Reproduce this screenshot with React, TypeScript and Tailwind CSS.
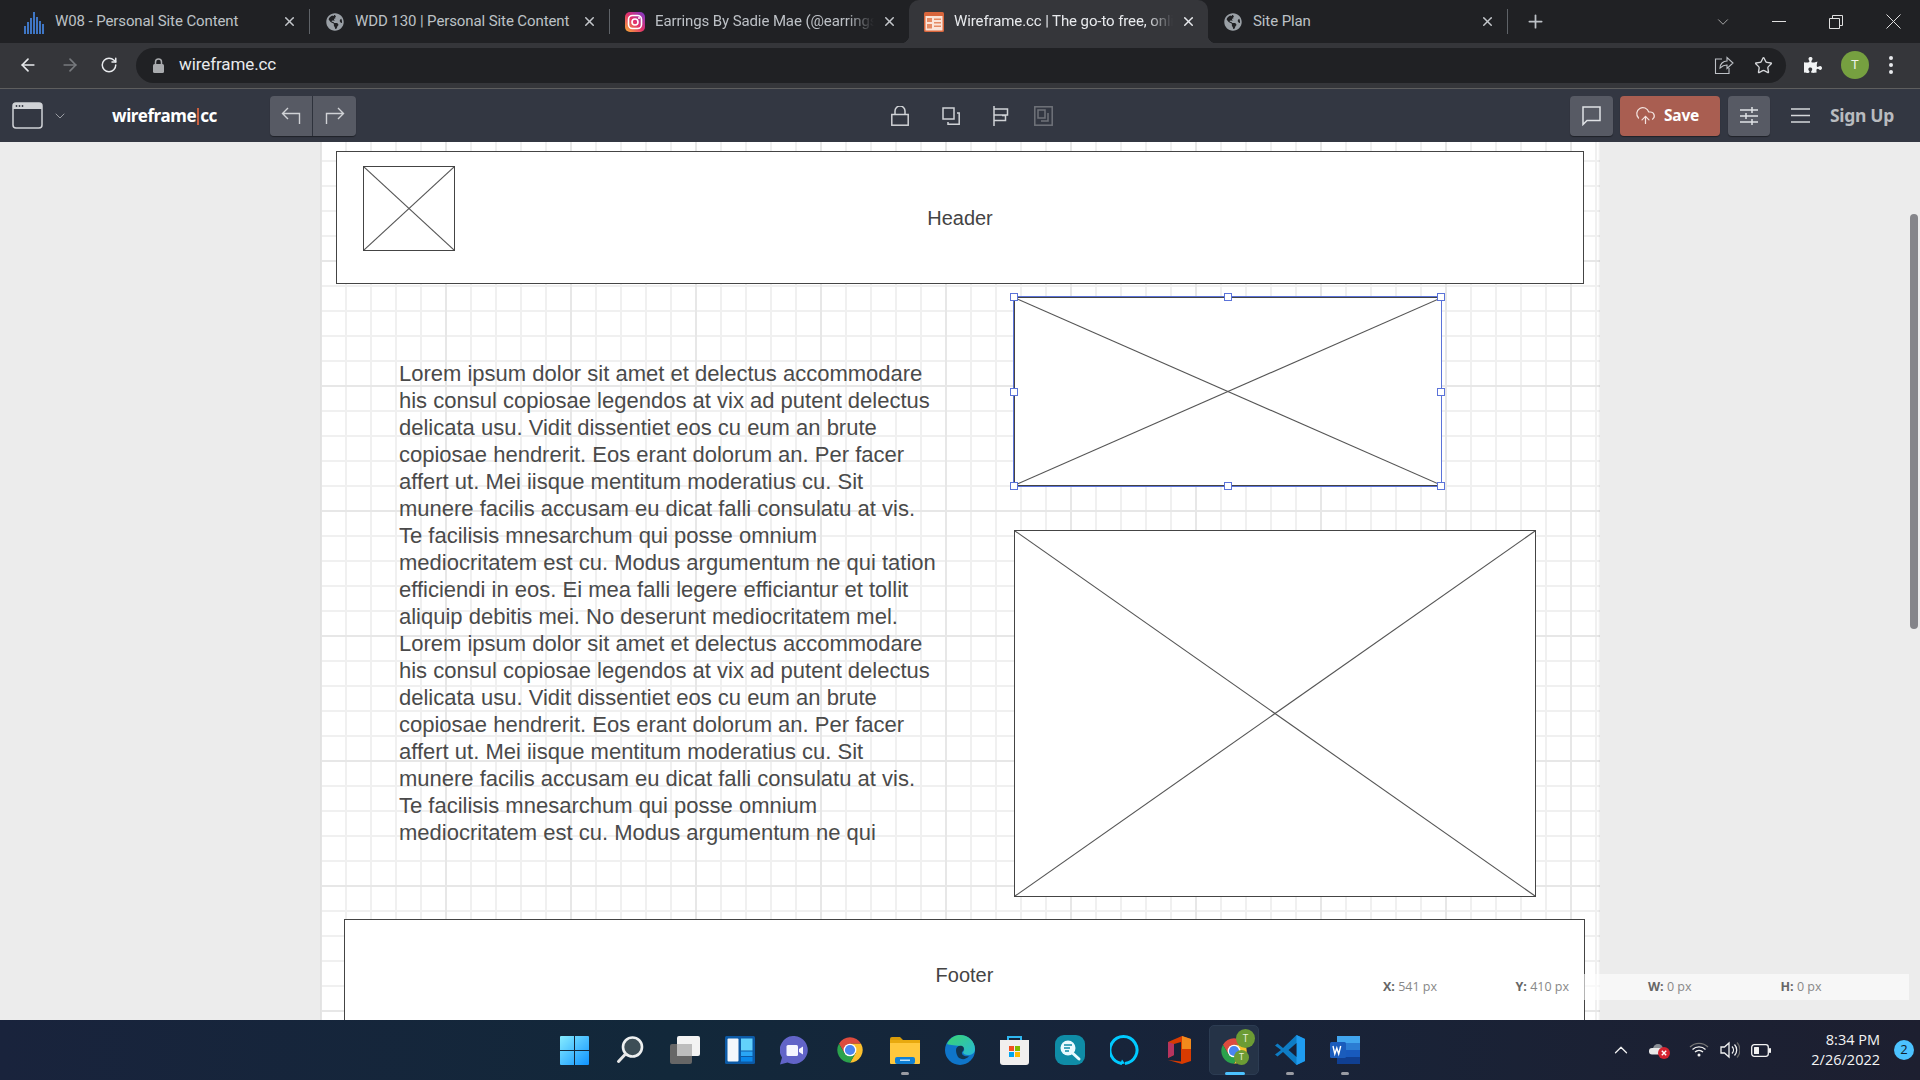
import React from "react";
import { ArrowLeft, ArrowRight, RotateCw, Star, CloudUpload, X, Plus, ChevronDown, ChevronUp } from "lucide-react";
import { FaGlobeAmericas, FaPuzzlePiece } from "react-icons/fa";

const W08 = () => (
  <svg width="21" height="24" viewBox="0 0 21 24" fill="#3f76c4">
    <rect x="0" y="16" width="2" height="8" /><rect x="3" y="12" width="2" height="12" /><rect x="6" y="8" width="2" height="16" />
    <rect x="9" y="2" width="2" height="22" /><rect x="12" y="7" width="2" height="17" /><rect x="15" y="11" width="2" height="13" /><rect x="18" y="14" width="2" height="10" />
  </svg>
);
const Insta = () => (
  <svg width="20" height="20" viewBox="0 0 20 20">
    <defs><linearGradient id="ig" x1="0" y1="1" x2="1" y2="0"><stop offset="0" stopColor="#f9b233" /><stop offset=".5" stopColor="#e1306c" /><stop offset="1" stopColor="#7a3ad0" /></linearGradient></defs>
    <rect width="20" height="20" rx="5" fill="url(#ig)" />
    <rect x="3.5" y="3.5" width="13" height="13" rx="4" fill="none" stroke="#fff" strokeWidth="1.6" />
    <circle cx="10" cy="10" r="3" fill="none" stroke="#fff" strokeWidth="1.6" /><circle cx="14" cy="6" r="1" fill="#fff" />
  </svg>
);
const WfFav = () => (
  <svg width="20" height="20" viewBox="0 0 20 20">
    <rect width="20" height="20" rx="1.5" fill="#d9663c" /><rect x="1.5" y="4" width="17" height="14.5" fill="#fbe4d8" />
    <rect x="3" y="6" width="5" height="4" fill="#e58a63" /><rect x="3" y="12" width="5" height="4.5" fill="#e58a63" /><rect x="10" y="6.5" width="7" height="1.5" fill="#e58a63" /><rect x="10" y="10" width="7" height="1.5" fill="#e58a63" /><rect x="10" y="13.5" width="7" height="1.5" fill="#e58a63" />
  </svg>
);

function Tab({ icon, title, active, fade }: { icon: React.ReactNode; title: string; active?: boolean; fade?: boolean }) {
  return (
    <div className={`relative flex h-full w-[299px] shrink-0 items-center pl-[14px] pr-[12px] ${active ? "rounded-t-[10px] bg-[#35363a] text-[#e8eaed]" : "text-[#bdc1c6]"}`}>
      {active && <div className="absolute bottom-0 left-[-8px] h-2 w-2 bg-[radial-gradient(circle_at_0_0,transparent_8px,#35363a_8.5px)]" />}
      {active && <div className="absolute bottom-0 right-[-8px] h-2 w-2 bg-[radial-gradient(circle_at_100%_0,transparent_8px,#35363a_8.5px)]" />}
      <div className="flex w-[21px] shrink-0 justify-center">{icon}</div>
      <div className={`ml-[10px] min-w-0 flex-1 overflow-hidden whitespace-nowrap text-[15px] tracking-[-0.1px] ${fade ? "[mask-image:linear-gradient(to_right,black_88%,transparent_100%)]" : ""}`}>{title}</div>
      <X size={15} strokeWidth={2.4} className={`ml-[8px] shrink-0 ${active ? "text-[#e8eaed]" : "text-[#c4c7cb]"}`} />
    </div>
  );
}
const TabSep = () => <div className="h-[25px] w-px shrink-0 bg-[#5f6368]" />;
const Globe = () => <FaGlobeAmericas size={18} color="#9aa0a6" />;

function TabStrip() {
  return (
    <div className="flex h-[43px] shrink-0 items-center bg-[#202124] pl-[10px]">
      <Tab icon={<W08 />} title="W08 - Personal Site Content" />
      <TabSep />
      <Tab icon={<Globe />} title="WDD 130 | Personal Site Content" />
      <TabSep />
      <Tab icon={<Insta />} title="Earrings By Sadie Mae (@earrings_by_sadie_mae)" fade />
      <Tab icon={<WfFav />} title="Wireframe.cc | The go-to free, online wireframe tool" fade active />
      <Tab icon={<Globe />} title="Site Plan" />
      <TabSep />
      <Plus size={21} strokeWidth={2} className="ml-[17px] text-[#bdc1c6]" />
      <ChevronDown size={18} strokeWidth={1} className="ml-[168px] text-[#d0d0d0]" />
      <svg width="14" height="14" viewBox="0 0 14 14" className="ml-[40px]" stroke="#e0e0e0" fill="none"><path d="M0 6.5H14" /></svg>
      <svg width="14" height="14" viewBox="0 0 14 14" className="ml-[43px]" stroke="#e0e0e0" fill="none"><path d="M.5 3.5h10v10H.5zM3.5 3.5V.5h10v10h-3" /></svg>
      <svg width="15" height="15" viewBox="0 0 15 15" className="ml-[43px]" stroke="#e0e0e0" fill="none"><path d="M.5.5l14 14M14.5.5l-14 14" /></svg>
    </div>
  );
}

function AddressBar() {
  return (
    <div className="flex h-[46px] shrink-0 items-center border-b border-[#5e5e5e] bg-[#35363a] pb-[1px] pl-[18px]">
      <ArrowLeft size={20} strokeWidth={2} className="text-[#e8eaed]" />
      <ArrowRight size={20} strokeWidth={2} className="ml-[22px] text-[#777a7e]" />
      <RotateCw size={18} strokeWidth={2} className="ml-[20px] text-[#e8eaed]" />
      <div className="ml-[18px] flex h-[35px] w-[1650px] shrink-0 items-center rounded-full bg-[#202124] pl-[17px]">
        <svg width="11" height="15" viewBox="0 0 11 15" fill="#a9abae"><rect y="6" width="11" height="9" rx="1.5" /><path d="M2.5 6V4a3 3 0 016 0v2" fill="none" stroke="#a9abae" strokeWidth="1.5" /></svg>
        <span className="ml-[15px] text-[17px] tracking-[-0.1px] text-[#e8eaed]">wireframe.cc</span>
        <div className="ml-auto flex items-center">
          <svg width="20" height="20" viewBox="0 0 20 20" fill="none" stroke="#bdc1c6" strokeWidth="1.1"><path d="M8 4H1.5v14.5H15V13M6 13c0-4 3-7 7-7V2.500l6 5.500-6 5.500V10c-3 0-5 1-7 3z" /></svg>
          <Star size={19} strokeWidth={1.7} className="ml-[20px] mr-[13px] text-[#d5d7da]" />
        </div>
      </div>
      <FaPuzzlePiece size={18} color="#f1f3f4" className="ml-[18px]" />
      <div className="ml-[19px] flex h-[28px] w-[28px] items-center justify-center rounded-full bg-[#76a040] text-[13px] text-[#eef3e6]">T</div>
      <div className="ml-[20px] flex flex-col gap-[3px]">
        <div className="h-[4px] w-[4px] rounded-full bg-[#e8eaed]" /><div className="h-[4px] w-[4px] rounded-full bg-[#e8eaed]" /><div className="h-[4px] w-[4px] rounded-full bg-[#e8eaed]" />
      </div>
    </div>
  );
}

const IC = "#d0d2d6";
function AppToolbar() {
  return (
    <div className="flex h-[53px] shrink-0 items-center bg-[#333742] font-['Noto_Sans',sans-serif]">
      <svg width="31" height="27" viewBox="0 0 31 27" fill="none" className="ml-[12px]"><rect x="1" y="1" width="29" height="25" rx="3" stroke={IC} strokeWidth="1.5" /><path d="M1 5.500V4a3 3 0 013-3h23a3 3 0 013 3v3H1z" fill={IC} /><circle cx="4.500" cy="4" r=".9" fill="#333742" /><circle cx="7.500" cy="4" r=".9" fill="#333742" /><circle cx="10.500" cy="4" r=".9" fill="#333742" /></svg>
      <ChevronDown size={16} strokeWidth={1.2} className="ml-[9px] text-[#b5b8bd]" />
      <div className="ml-[44px] w-[158px] text-[17px] font-bold tracking-[-0.4px] text-white">wireframe<span className="mx-[1px] inline-block h-[17px] w-[2px] translate-y-[3px] bg-[#c9603f]" />cc</div>
      <div className="flex h-[40px] w-[86px] overflow-hidden rounded-[4px] shadow-[0_1px_1px_rgba(0,0,0,.4)]">
        <div className="flex w-[42px] items-center justify-center bg-[#575a64]"><svg width="20" height="18" viewBox="0 0 20 18" fill="none" stroke={IC} strokeWidth="1.400"><path d="M7 1L1.500 6.500 7 12M1.500 6.500H18.500V17" /></svg></div>
        <div className="w-[1px] bg-[#2e323c]" />
        <div className="flex flex-1 items-center justify-center bg-[#575a64]"><svg width="20" height="18" viewBox="0 0 20 18" fill="none" stroke={IC} strokeWidth="1.400"><path d="M13 1l5.500 5.500L13 12M18.500 6.500H1.500V17" /></svg></div>
      </div>
      <svg width="18" height="20" viewBox="0 0 18 20" fill="none" stroke={IC} strokeWidth="1.500" className="ml-[535px]"><rect x=".8" y="8.500" width="16.400" height="10.700" /><path d="M4 8.500V5a5 5 0 0110 0v3.500" /></svg>
      <svg width="18" height="18" viewBox="0 0 18 18" fill="none" stroke={IC} strokeWidth="1.500" className="ml-[33px]"><rect x="1" y="1" width="11" height="11" /><path d="M15 6h2.200v11.200H6V15" /></svg>
      <svg width="16" height="20" viewBox="0 0 16 20" fill="none" stroke={IC} strokeWidth="1.500" className="ml-[33px]"><path d="M1 0v20M1 3h13.500v6H1M9 9.500h3.500v5H1" /></svg>
      <svg width="19" height="20" viewBox="0 0 19 20" fill="none" stroke="#70737a" strokeWidth="1.500" className="ml-[25px]"><rect x=".8" y=".8" width="17.400" height="18.400" /><rect x="4" y="4" width="7" height="8" /><path d="M14 7v8H7" /></svg>
      <div className="ml-[517px] flex h-[40px] w-[43px] items-center justify-center rounded-[4px] bg-[#575a64] shadow-[0_1px_1px_rgba(0,0,0,.4)]">
        <svg width="19" height="20" viewBox="0 0 19 20" fill="none" stroke="#e0e2e5" strokeWidth="1.500"><path d="M1 1h17v13.500H5L1 18.500z" /></svg>
      </div>
      <div className="ml-[7px] flex h-[40px] w-[100px] items-center rounded-[4px] bg-[#a95e51] pl-[15px] shadow-[0_1px_1px_rgba(0,0,0,.4)]">
        <CloudUpload size={21} strokeWidth={1.400} className="text-[#f3e3df]" />
        <span className="ml-[8px] text-[15.500px] font-bold tracking-[-0.2px] text-white">Save</span>
      </div>
      <div className="ml-[8px] flex h-[40px] w-[42px] items-center justify-center rounded-[4px] bg-[#575a64] shadow-[0_1px_1px_rgba(0,0,0,.4)]">
        <svg width="18" height="20" viewBox="0 0 18 20" fill="none" stroke="#e0e2e5" strokeWidth="1.500"><path d="M0 4h18M0 10h18M0 16h18M12 1v6M6 7v6M12 13v6" /></svg>
      </div>
      <svg width="19" height="15" viewBox="0 0 19 15" fill="none" stroke="#d5d7da" strokeWidth="1.600" className="ml-[21px]"><path d="M0 1h19M0 7.500h19M0 14h19" /></svg>
      <span className="ml-[20px] text-[17.500px] font-bold tracking-[-0.3px] text-[#b9bbbf]">Sign Up</span>
    </div>
  );
}

function Placeholder({ className }: { className: string }) {
  return (
    <div className={`absolute border border-[#444] bg-white ${className}`}>
      <svg className="h-full w-full" viewBox="0 0 100 100" preserveAspectRatio="none" fill="none" stroke="#555" strokeWidth="1.100">
        <line x1="0" y1="0" x2="100" y2="100" vectorEffect="non-scaling-stroke" />
        <line x1="100" y1="0" x2="0" y2="100" vectorEffect="non-scaling-stroke" />
      </svg>
    </div>
  );
}

const HS = "absolute h-[8px] w-[8px] -translate-x-1/2 -translate-y-1/2 border border-[#5b73d9] bg-white";
const lines = [
  "Lorem ipsum dolor sit amet et delectus accommodare",
  "his consul copiosae legendos at vix ad putent delectus",
  "delicata usu. Vidit dissentiet eos cu eum an brute",
  "copiosae hendrerit. Eos erant dolorum an. Per facer",
  "affert ut. Mei iisque mentitum moderatius cu. Sit",
  "munere facilis accusam eu dicat falli consulatu at vis.",
  "Te facilisis mnesarchum qui posse omnium",
];
const para = [
  ...lines,
  "mediocritatem est cu. Modus argumentum ne qui tation",
  "efficiendi in eos. Ei mea falli legere efficiantur et tollit",
  "aliquip debitis mei. No deserunt mediocritatem mel.",
  ...lines,
  "mediocritatem est cu. Modus argumentum ne qui",
];

function Canvas() {
  return (
    <div className="relative flex-1 overflow-hidden bg-[#ececec] font-['Liberation_Sans',sans-serif]">
      <div className="relative mx-auto h-full w-[1280px] bg-white bg-[image:linear-gradient(to_right,#e7e7e7_2px,transparent_2px),linear-gradient(to_bottom,#e7e7e7_2px,transparent_2px),linear-gradient(to_right,#f0f0f0_2px,transparent_2px),linear-gradient(to_bottom,#f0f0f0_2px,transparent_2px)] bg-[size:125px_125px,125px_125px,25px_25px,25px_25px] bg-[position:0_0,0_118px,0_0,0_18px] shadow-[inset_-3px_0_2px_-2px_rgba(0,0,0,.08),inset_3px_0_2px_-2px_rgba(0,0,0,.03)]">
        <div className="absolute left-[16px] top-[9px] flex h-[133px] w-[1248px] items-center justify-center border border-[#444] bg-white text-[20px] text-[#444]">Header</div>
        <Placeholder className="left-[43px] top-[24px] h-[85px] w-[92px]" />
        <div className="absolute left-[79px] top-[218px] whitespace-nowrap text-[22px] leading-[27px] text-[#4a4a4a]">
          {para.map((l, i) => <div key={i}>{l}</div>)}
        </div>
        <Placeholder className="left-[694px] top-[155px] h-[189px] w-[428px]" />
        <div className="absolute left-[693px] top-[154px] h-[191px] w-[429px] border border-[#5b73d9]">
          <div className={`${HS} left-0 top-0`} /><div className={`${HS} left-1/2 top-0`} /><div className={`${HS} left-full top-0`} />
          <div className={`${HS} left-0 top-1/2`} /><div className={`${HS} left-full top-1/2`} />
          <div className={`${HS} left-0 top-full`} /><div className={`${HS} left-1/2 top-full`} /><div className={`${HS} left-full top-full`} />
        </div>
        <Placeholder className="left-[694px] top-[388px] h-[367px] w-[522px]" />
        <div className="absolute left-[24px] top-[777px] flex h-[112px] w-[1241px] items-center justify-center border border-[#444] bg-white text-[20px] text-[#444]">Footer</div>
      </div>
      <div className="absolute left-[1320px] top-[832px] flex h-[26px] w-[589px] items-center bg-white/60 pl-[63px] font-['Open_Sans',sans-serif] text-[12.500px] text-[#888]">
        {[["X:", "541 px"], ["Y:", "410 px"], ["W:", "0 px"], ["H:", "0 px"]].map(([a, b]) => (
          <div key={a} className="w-[132.500px] shrink-0"><b className="text-[#666]">{a}</b> {b}</div>
        ))}
      </div>
      <div className="absolute left-[1910px] top-[72px] h-[415px] w-[8px] rounded-full bg-[#85858a]" />
    </div>
  );
}

const Chrome = ({ size = 28 }: { size?: number }) => (
  <svg width={size} height={size} viewBox="4 2 40 44">
    <path d="M6.680 14A20 20 0 0141.320 14H24L15.340 29z" fill="#dd4b3e" />
    <path d="M41.320 14A20 20 0 0124 44L32.660 29 24 14z" fill="#fbc02d" />
    <path d="M24 44A20 20 0 016.680 14L15.340 29H32.660z" fill="#2ba24c" />
    <circle cx="24" cy="24" r="10" fill="#fff" /><circle cx="24" cy="24" r="8" fill="#4a85f0" />
  </svg>
);

const icons: React.ReactNode[] = [
  <svg key="win" width="29" height="29" viewBox="0 0 29 29"><defs><linearGradient id="w" x1="0" y1="0" x2="1" y2="1"><stop offset="0" stopColor="#86ecff" /><stop offset="1" stopColor="#0f93ff" /></linearGradient></defs><path d="M0 1a1 1 0 011-1h13v14H0zM15 0h13a1 1 0 011 1v13H15zM0 15h14v14H1a1 1 0 01-1-1zM15 15h14v13a1 1 0 01-1 1H15z" fill="url(#w)" /></svg>,
  <svg key="s" width="28" height="28" viewBox="0 0 28 28"><circle cx="16.500" cy="11" r="9.500" fill="#3d4e56" stroke="#eef0f0" strokeWidth="2.600" /><path d="M9.500 18L2.500 25.500" stroke="#e6e6e6" strokeWidth="3" strokeLinecap="round" /></svg>,
  <svg key="t" width="30" height="28" viewBox="0 0 30 28"><rect x="0" y="8" width="22" height="20" rx="2" fill="#666" /><rect x="7" y="0" width="23" height="20" rx="2" fill="#f3f3f3" /><rect x="7" y="8" width="15" height="12" fill="#bdbdbd" /></svg>,
  <svg key="wd" width="30" height="28" viewBox="0 0 30 28"><rect width="30" height="28" rx="1.500" fill="#0c5aa6" /><rect x="2.500" y="2.500" width="11" height="23" rx="1" fill="#f3f7fb" /><rect x="16" y="2.500" width="11.500" height="12" fill="#63d1fb" /><rect x="16" y="15.500" width="11.500" height="4.500" fill="#2aa6f5" /><rect x="16" y="21" width="11.500" height="4.500" fill="#0a88ea" /></svg>,
  <svg key="c" width="29" height="29" viewBox="0 0 29 29"><path d="M14.500 0a14 14 0 11-7 26.500L0 28.500l2-7A14 14 0 0114.500 0z" fill="#6264c8" /><rect x="6.500" y="9" width="11.500" height="11" rx="1.500" fill="#f6f6ff" /><path d="M19 13l4-2.500v8L19 16z" fill="#f6f6ff" /></svg>,
  <Chrome key="ch" />,
  <svg key="f" width="30" height="27" viewBox="0 0 30 27"><path d="M0 2a2 2 0 012-2h8l3 3h-13z" fill="#d99c0a" /><rect y="3" width="30" height="24" rx="1" fill="#ffc83d" /><rect y="3" width="30" height="3" fill="#e8a90e" /><rect x="5" y="20" width="20" height="7" rx="2" fill="#0f7fd4" /><rect x="10" y="22.500" width="10" height="1.500" fill="#bfe3fb" /></svg>,
  <svg key="e" width="30" height="30" viewBox="0 0 30 30"><defs><linearGradient id="eg" x1="0" y1="0" x2="1" y2="1"><stop offset="0" stopColor="#3bd46e" /><stop offset="1" stopColor="#27b8d8" /></linearGradient></defs><circle cx="15" cy="15" r="15" fill="#0f75c9" /><path d="M2 9C5 2 11 0 15 0c8 0 15 6 15 14 0 4-3 6-7 6-3 0-5-1-5-3 2-1 2-5-3-6C9 10 3 10 2 9z" fill="url(#eg)" /><path d="M11 15c0-3 3-5 6-4 3 1 2 5 0 6-1 3 3 5 7 4-3 4-8 4-11 1-1-2-2-4-2-7z" fill="#12344f" /></svg>,
  <svg key="st" width="29" height="30" viewBox="0 0 29 30"><path d="M8 6V2h13v4" fill="none" stroke="#2fb7f0" strokeWidth="2" /><path d="M0 5h29v22a3 3 0 01-3 3H3a3 3 0 01-3-3z" fill="#f1efee" /><rect x="9" y="11" width="5" height="5" fill="#f25022" /><rect x="15" y="11" width="5" height="5" fill="#7fba00" /><rect x="9" y="17" width="5" height="5" fill="#00a4ef" /><rect x="15" y="17" width="5" height="5" fill="#ffb900" /></svg>,
  <svg key="q" width="30" height="30" viewBox="0 0 30 30"><rect width="30" height="30" rx="9" fill="#0f8ca6" /><circle cx="13" cy="13" r="7.500" fill="#eafafe" /><path d="M18 18.500l6 5.500" stroke="#eafafe" strokeWidth="3" strokeLinecap="round" /><path d="M9 10h8M9 13h6M10 16h4" stroke="#0f8ca6" strokeWidth="1.500" /></svg>,
  <svg key="a" width="30" height="30" viewBox="0 0 30 30"><path d="M12 28.500A13.500 13.500 0 1115 28.500" fill="none" stroke="#00caff" strokeWidth="3" /><path d="M12 24.500l3 4-5 1z" fill="#00caff" /></svg>,
  <svg key="o" width="24" height="28" viewBox="0 0 24 28"><path d="M0 6L14 0l9 3v22l-9 3-14-4 13 1.500V6L6 8v11l-6 3z" fill="#d83b01" /><path d="M0 6l6 2v11l-6 3z" fill="#b7345f" /><path d="M14 0l9 3v10H14z" fill="#f28a1c" /></svg>,
  <div key="act" className="relative h-[29px] w-[29px]">
    <div className="absolute left-0 top-[1px]"><Chrome size={28} /></div>
    <div className="absolute left-[16px] top-[-7px] flex h-[19px] w-[19px] items-center justify-center rounded-full bg-[#6c9c34] text-[10px] text-[#e8f0dc]">T</div>
    <div className="absolute left-[14px] top-[14px] flex h-[15px] w-[15px] items-center justify-center rounded-full bg-[#6c9c34] text-[9px] text-[#e8f0dc]">T</div>
  </div>,
  <svg key="v" width="30" height="30" viewBox="0 0 30 30"><path d="M21.500 0L30 4v22l-8.500 4L8 17l-5.500 4.500L0 19.500 6 15 0 10.500 2.500 8.500 8 13z" fill="#0e7cc4" /><path d="M21.500 0L30 4v22l-8.500 4z" fill="#1f9cf0" /><path d="M21.500 8l-8 7 8 7z" fill="#16223a" /></svg>,
  <svg key="wo" width="30" height="28" viewBox="0 0 30 28"><rect x="7" y="0" width="23" height="7" fill="#41a5ee" /><rect x="7" y="7" width="23" height="7" fill="#2b7cd3" /><rect x="7" y="14" width="23" height="7" fill="#185abd" /><rect x="7" y="21" width="23" height="7" fill="#103f91" /><rect y="6" width="16" height="16" rx="1.500" fill="#1a5cbc" /><path d="M3 10l1.800 8 2-6 1.900 6 2-8" fill="none" stroke="#fff" strokeWidth="1.400" /></svg>,
];
const dots = [6, 12, 13, 14];

function Taskbar() {
  return (
    <div className="flex h-[60px] shrink-0 items-center bg-[linear-gradient(to_right,#19233c_0%,#12283a_35%,#17243a_58%,#1d1f30_100%)] pl-[547px] font-['Open_Sans',sans-serif]">
      {icons.map((ic, i) => {
        const active = i === 12;
        return (
          <div key={i} className={`relative flex h-[50px] w-[55px] shrink-0 items-center justify-center ${i === 0 ? "" : ""}`}>
            {active && <div className="absolute inset-y-0 left-[2px] right-[3px] rounded-[5px] border border-[#2c3c52] bg-[#253347]" />}
            <div className="relative">{ic}</div>
            {active && <div className="absolute bottom-0 left-1/2 h-[3.500px] w-[20px] -translate-x-1/2 rounded-full bg-[#4cc2ff]" />}
            {(i === 6 || i === 13 || i === 14) && <div className="absolute bottom-[0px] left-1/2 h-[3.500px] w-[8px] -translate-x-1/2 rounded-full bg-[#9a9ca3]" />}
          </div>
        );
      })}
      <ChevronUp size={22} strokeWidth={1.400} className="ml-[238px] text-[#f2f2f2]" />
      <svg width="22" height="20" viewBox="0 0 22 20" className="ml-[17px]"><circle cx="9" cy="9" r="5" fill="#8b8f96" /><rect x="0" y="8" width="14" height="6.500" rx="3" fill="#e8e8e8" /><circle cx="15" cy="13" r="6" fill="#d3222f" /><path d="M12.800 10.800l4.400 4.400M17.200 10.800l-4.400 4.400" stroke="#fff" strokeWidth="1.400" /></svg>
      <svg width="20" height="16" viewBox="0 0 20 16" fill="none" stroke="#f2f2f2" strokeWidth="1.300" className="ml-[18px]"><path d="M1 5a13 13 0 0118 0" stroke="#777" /><path d="M3.500 7.500a9.500 9.500 0 0113 0M6 10a6 6 0 018 0" /><circle cx="10" cy="13" r="1.500" fill="#f2f2f2" stroke="none" /></svg>
      <svg width="20" height="18" viewBox="0 0 20 18" fill="none" stroke="#f2f2f2" strokeWidth="1.300" className="ml-[11px]"><path d="M1 6h3.500L9 2v14l-4.500-4H1z" /><path d="M12 5.500a5 5 0 010 7M14.500 3.500a8 8 0 010 11" /><path d="M17 1.500a11 11 0 010 15" stroke="#666" /></svg>
      <svg width="20" height="13" viewBox="0 0 20 13" fill="none" className="ml-[11px]"><rect x=".7" y=".7" width="16.600" height="11.600" rx="2.500" stroke="#f2f2f2" strokeWidth="1.300" /><rect x="3" y="3" width="5" height="7" rx=".5" fill="#f2f2f2" /><rect x="18" y="4" width="2" height="5" rx=".8" fill="#f2f2f2" /></svg>
      <div className="ml-[19px] w-[90px] text-right text-[14.500px] leading-[20px] text-[#f4f4f4]">
        <div>8:34 PM</div><div>2/26/2022</div>
      </div>
      <div className="ml-[14px] flex h-[20px] w-[20px] items-center justify-center rounded-full bg-[#4cc2ff] text-[13px] text-[#10202c]">2</div>
    </div>
  );
}

export default function App() {
  return (
    <div className="flex h-screen w-[1920px] flex-col overflow-hidden font-['Roboto',sans-serif]">
      <TabStrip />
      <AddressBar />
      <AppToolbar />
      <Canvas />
      <Taskbar />
    </div>
  );
}
